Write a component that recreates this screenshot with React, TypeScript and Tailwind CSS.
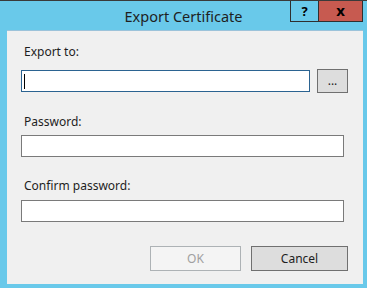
export default function App() {
  const font = { fontFamily: '"Noto Sans", "Open Sans", sans-serif' };

  return (
    <div
      className="flex h-[288px] w-[367px] flex-col bg-[#69c9ea] text-[#1e1e1e]"
      style={font}
    >
      {/* title bar */}
      <div className="relative flex h-[30px] shrink-0 items-center justify-center border-t border-[#3a3a3a]">
        <span className="pt-[1px] text-[14.5px] leading-none text-[#1f1f1f]">Export Certificate</span>
        <div className="absolute right-[4px] top-0 flex h-[21px]">
          <div className="flex w-[28px] items-center justify-center border border-r-0 border-t-0 border-[#2f2f2f] text-[13px] font-bold leading-none text-black">
            ?
          </div>
          <div className="flex w-[45px] items-center justify-center border border-t-0 border-[#2f2f2f] bg-[#c75a50] pb-[1px] text-[15px] font-bold leading-none text-black">
            x
          </div>
        </div>
      </div>

      {/* client area */}
      <div className="ml-[7px] mr-[4px] flex h-[254px] flex-col border-t border-[#9cc3da] bg-[#f0f0f0] pl-[14px] pr-[15px]">
        <div className="mt-[13px] h-[16px] pl-[3px] text-[12px] leading-[16px]">Export to:</div>

        <div className="mt-[9px] flex h-[24px] items-center gap-[7px]">
          <div className="flex h-[22px] w-[289px] items-center border border-[#2b6391] bg-white pl-[2px]">
            <span className="h-[15px] w-[1px] bg-black" />
          </div>
          <div className="flex h-[24px] w-[31px] items-center justify-center border border-[#707070] bg-[#dddddd] text-[12px] leading-none">
            ...
          </div>
        </div>

        <div className="mt-[21px] h-[16px] pl-[3px] text-[12px] leading-[16px]">Password:</div>
        <div className="mt-[5px] h-[22px] w-[323px] border border-[#7a7a7a] bg-white" />

        <div className="mt-[21px] h-[16px] pl-[3px] text-[12px] leading-[16px]">Confirm password:</div>
        <div className="mt-[6px] h-[22px] w-[323px] border border-[#7a7a7a] bg-white" />

        <div className="mt-[24px] flex justify-end gap-[10px]">
          <div className="flex h-[25px] w-[91px] items-center justify-center border border-[#adb2b5] bg-[#f4f4f4] text-[12px] text-[#a0a0a0]">
            OK
          </div>
          <div className="flex h-[25px] w-[97px] items-center justify-center border border-[#707070] bg-[#dddddd] text-[12px]">
            Cancel
          </div>
        </div>
      </div>
    </div>
  );
}
